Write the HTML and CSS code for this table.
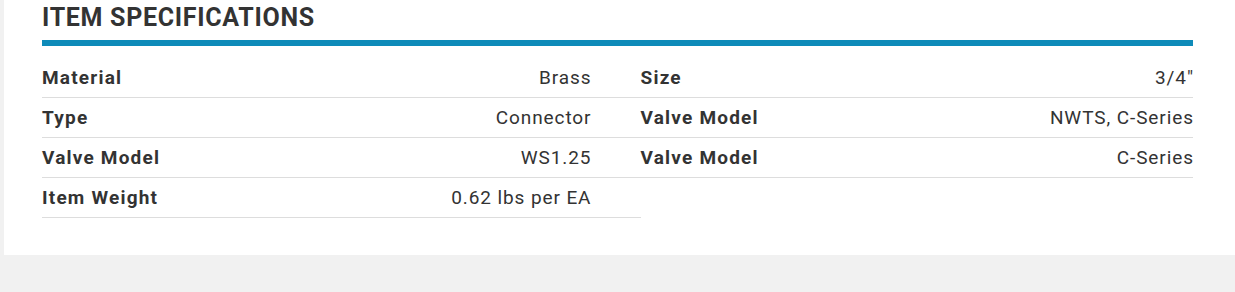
FILE: index.html
```html
<!DOCTYPE html>
<html lang="en">
<head>
<meta charset="utf-8">
<title>Item Specifications</title>
<link rel="stylesheet" href="styles.css">
</head>
<body>
<section class="card">
  <h2 class="title">ITEM SPECIFICATIONS</h2>
  <div class="specs">
    <div class="col col-left">
      <div class="row"><span class="label">Material</span><span class="value">Brass</span></div>
      <div class="row"><span class="label">Type</span><span class="value">Connector</span></div>
      <div class="row"><span class="label">Valve Model</span><span class="value">WS1.25</span></div>
      <div class="row"><span class="label">Item Weight</span><span class="value">0.62 lbs per EA</span></div>
    </div>
    <div class="col col-right">
      <div class="row"><span class="label">Size</span><span class="value">3/4"</span></div>
      <div class="row"><span class="label">Valve Model</span><span class="value">NWTS, C-Series</span></div>
      <div class="row"><span class="label">Valve Model</span><span class="value">C-Series</span></div>
    </div>
  </div>
</section>
</body>
</html>
```
FILE: styles.css
```css
html, body {
  margin: 0;
  padding: 0;
}
body {
  background: #f1f1f1;
  font-family: Roboto, "Liberation Sans", sans-serif;
  color: #333;
}
.card {
  background: #fff;
  margin-left: 4px;
  height: 255px;
  box-sizing: border-box;
  padding: 3px 42px 0 38px;
}
.title {
  margin: 0;
  font-size: 25px;
  line-height: 30px;
  font-weight: 700;
  letter-spacing: 0.7px;
  color: #333;
  padding-bottom: 7px;
  border-bottom: 6px solid #0e8bb9;
}
.specs {
  display: grid;
  grid-template-columns: 52% 48%;
  margin-top: 12px;
}
.row {
  display: flex;
  justify-content: space-between;
  align-items: center;
  height: 39px;
  border-bottom: 1px solid #dddddd;
  font-size: 19px;
}
.col-left .row {
  padding-right: 50px;
}
.label {
  font-weight: 700;
  letter-spacing: 1.2px;
}
.value {
  font-weight: 400;
  letter-spacing: 0.9px;
  margin-right: -0.9px;
}
```
